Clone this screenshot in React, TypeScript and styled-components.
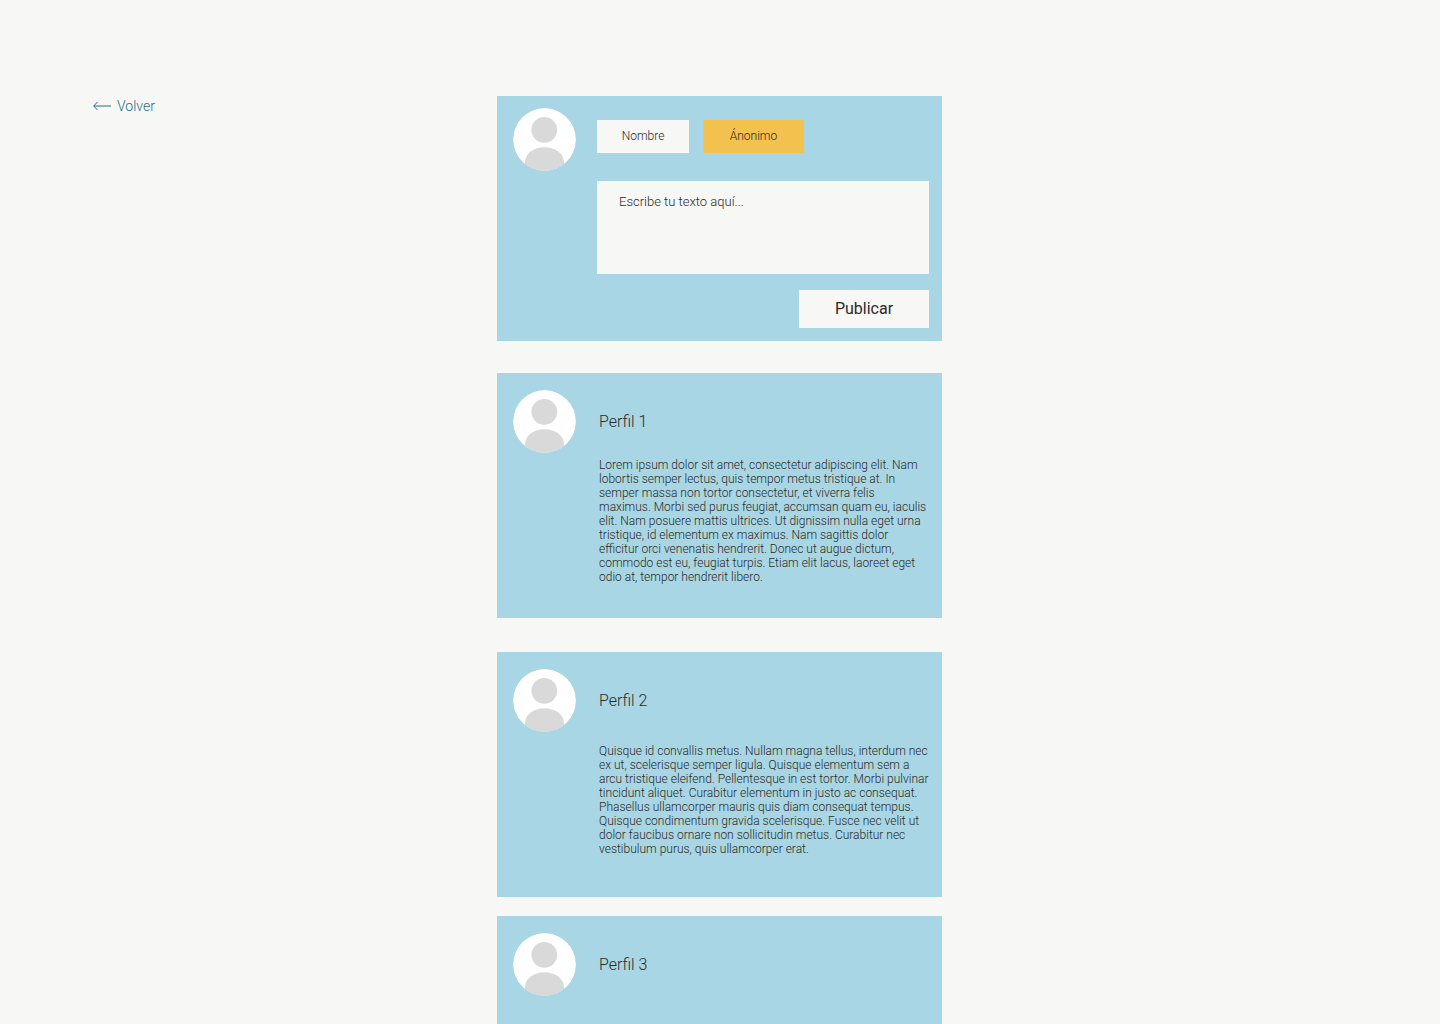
import React, { useState } from "react";
import styled, { createGlobalStyle } from "styled-components";

const GlobalStyle = createGlobalStyle`
  *, *::before, *::after { box-sizing: border-box; }
  body {
    margin: 0;
    background: #f7f7f5;
    color: #2d2a26;
    font-family: Roboto, "Liberation Sans", sans-serif;
    font-weight: 300;
  }
  button, textarea { font: inherit; color: inherit; }
`;

const Page = styled.div`
  display: grid;
  grid-template-columns: 1fr minmax(0, 445px) 1fr;
  align-items: start;
  padding: 96px 94px 32px 93px;
`;

const BackLink = styled.a`
  display: inline-flex;
  align-items: center;
  justify-self: start;
  gap: 6px;
  color: #22708f;
  font-size: 14px;
  line-height: 20px;
  text-decoration: none;
`;

const Feed = styled.main`
  display: flex;
  flex-direction: column;
`;

const Composer = styled.form`
  display: grid;
  grid-template-columns: 63px minmax(0, 1fr);
  column-gap: 21px;
  align-items: start;
  padding: 12px 13px 13px 16px;
  background: #a8d6e4;
`;

const ComposerFields = styled.div`
  display: flex;
  flex-direction: column;
  padding-top: 12px;
`;

const Choices = styled.div`
  display: flex;
  gap: 14px;
`;

const Choice = styled.button<{ $active?: boolean; $width: number }>`
  width: ${(p) => p.$width}px;
  height: 33px;
  padding: 0 0 2px;
  border: 0;
  background: ${(p) => (p.$active ? "#f2c14e" : "#f7f7f5")};
  font-size: 12px;
  line-height: 14px;
  cursor: pointer;
`;

const TextBox = styled.textarea`
  display: block;
  width: 100%;
  height: 93px;
  margin: 28px 0 16px;
  padding: 13px 22px;
  border: 0;
  border-radius: 0;
  outline: none;
  resize: none;
  background: #f7f7f5;
  font-size: 13px;
  line-height: 16px;
  &::placeholder { color: #2d2a26; opacity: 1; }
`;

const Publish = styled.button`
  align-self: flex-end;
  width: 130px;
  height: 38px;
  padding: 0;
  border: 0;
  background: #f7f7f5;
  font-size: 16px;
  font-weight: 400;
  line-height: 18px;
  cursor: pointer;
`;

const Post = styled.article<{ $space: number }>`
  display: flex;
  flex-direction: column;
  min-height: 245px;
  margin-top: ${(p) => p.$space}px;
  padding: 17px 13px 29px 16px;
  background: #a8d6e4;
`;

const PostHeader = styled.header`
  display: flex;
  align-items: center;
  gap: 23px;
`;

const PostName = styled.h2`
  margin: 0;
  font-size: 16px;
  font-weight: 300;
  line-height: 20px;
`;

const PostBody = styled.div`
  display: flex;
  flex: 1;
  align-items: center;
  padding-left: 86px;
`;

const PostText = styled.p`
  margin: 0;
  font-size: 12px;
  line-height: 14px;
`;

const AvatarIcon = styled.svg`
  display: block;
  flex: none;
  border-radius: 50%;
`;

function Avatar() {
  return (
    <AvatarIcon width="63" height="63" viewBox="0 0 63 63" aria-hidden="true">
      <circle cx="31.5" cy="31.5" r="31.5" fill="#fff" />
      <circle cx="31.3" cy="21.8" r="12.9" fill="#d9d9d9" />
      <path
        d="M12 56.2V54.5C12 45.5 20.5 39.2 31.5 39.2S51 45.5 51 54.5V56.2A31.5 31.5 0 0 1 12 56.2Z"
        fill="#d9d9d9"
      />
    </AvatarIcon>
  );
}

const posts = [
  {
    name: "Perfil 1",
    space: 32,
    text: "Lorem ipsum dolor sit amet, consectetur adipiscing elit. Nam lobortis semper lectus, quis tempor metus tristique at. In semper massa non tortor consectetur, et viverra felis maximus. Morbi sed purus feugiat, accumsan quam eu, iaculis elit. Nam posuere mattis ultrices. Ut dignissim nulla eget urna tristique, id elementum ex maximus. Nam sagittis dolor efficitur orci venenatis hendrerit. Donec ut augue dictum, commodo est eu, feugiat turpis. Etiam elit lacus, laoreet eget odio at, tempor hendrerit libero.",
  },
  {
    name: "Perfil 2",
    space: 34,
    text: "Quisque id convallis metus. Nullam magna tellus, interdum nec ex ut, scelerisque semper ligula. Quisque elementum sem a arcu tristique eleifend. Pellentesque in est tortor. Morbi pulvinar tincidunt aliquet. Curabitur elementum in justo ac consequat. Phasellus ullamcorper mauris quis diam consequat tempus. Quisque condimentum gravida scelerisque. Fusce nec velit ut dolor faucibus ornare non sollicitudin metus. Curabitur nec vestibulum purus, quis ullamcorper erat.",
  },
  { name: "Perfil 3", space: 19, text: "" },
];

export default function App() {
  const [anonymous, setAnonymous] = useState(true);
  return (
    <>
      <GlobalStyle />
      <Page>
        <BackLink href="#">
          <svg width="18" height="10" viewBox="0 0 18 10" fill="none" stroke="currentColor" strokeWidth="1" aria-hidden="true">
            <path d="M18 5H1M4.5 1L.7 5l3.8 4" />
          </svg>
          Volver
        </BackLink>
        <Feed>
          <Composer onSubmit={(e) => e.preventDefault()}>
            <Avatar />
            <ComposerFields>
              <Choices>
                <Choice type="button" $width={92} $active={!anonymous} aria-pressed={!anonymous} onClick={() => setAnonymous(false)}>
                  Nombre
                </Choice>
                <Choice type="button" $width={101} $active={anonymous} aria-pressed={anonymous} onClick={() => setAnonymous(true)}>
                  Ánonimo
                </Choice>
              </Choices>
              <TextBox aria-label="Texto" placeholder="Escribe tu texto aquí..." />
              <Publish type="submit">Publicar</Publish>
            </ComposerFields>
          </Composer>
          {posts.map((post) => (
            <Post key={post.name} $space={post.space}>
              <PostHeader>
                <Avatar />
                <PostName>{post.name}</PostName>
              </PostHeader>
              {post.text && (
                <PostBody>
                  <PostText>{post.text}</PostText>
                </PostBody>
              )}
            </Post>
          ))}
        </Feed>
      </Page>
    </>
  );
}
